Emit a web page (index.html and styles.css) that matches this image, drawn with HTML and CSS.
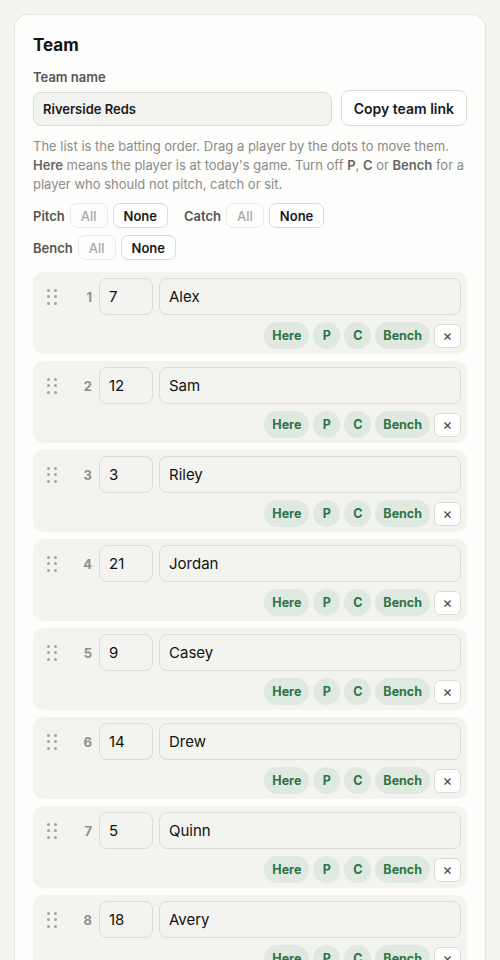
FILE: index.html
```html
<!DOCTYPE html>
<html lang="en">
<head>
<meta charset="utf-8">
<title>Team</title>
<link rel="stylesheet" href="styles.css">
</head>
<body>
<main class="card">
  <h2 class="title">Team</h2>
  <label class="label" for="teamname">Team name</label>
  <div class="name-row">
    <input id="teamname" class="team-input" value="Riverside Reds">
    <button class="copy-btn">Copy team link</button>
  </div>
  <p class="help">The list is the batting order. Drag a player by the dots to move them. <b>Here</b> means the player is at today's game. Turn off <b>P</b>, <b>C</b> or <b>Bench</b> for a player who should not pitch, catch or sit.</p>
  <div class="filters">
    <div class="fgroup"><span class="flabel">Pitch</span><button class="fbtn">All</button><button class="fbtn on">None</button></div>
    <div class="fgroup"><span class="flabel">Catch</span><button class="fbtn">All</button><button class="fbtn on">None</button></div>
    <div class="fgroup"><span class="flabel">Bench</span><button class="fbtn">All</button><button class="fbtn on">None</button></div>
  </div>
  <ol class="players">
    <li class="player"><div class="line"><span class="handle"><i></i><i></i><i></i><i></i><i></i><i></i></span><span class="order">1</span><input class="num" value="7"><input class="pname" value="Alex"></div><div class="tags"><button class="tag">Here</button><button class="tag">P</button><button class="tag">C</button><button class="tag">Bench</button><button class="remove">×</button></div></li>
    <li class="player"><div class="line"><span class="handle"><i></i><i></i><i></i><i></i><i></i><i></i></span><span class="order">2</span><input class="num" value="12"><input class="pname" value="Sam"></div><div class="tags"><button class="tag">Here</button><button class="tag">P</button><button class="tag">C</button><button class="tag">Bench</button><button class="remove">×</button></div></li>
    <li class="player"><div class="line"><span class="handle"><i></i><i></i><i></i><i></i><i></i><i></i></span><span class="order">3</span><input class="num" value="3"><input class="pname" value="Riley"></div><div class="tags"><button class="tag">Here</button><button class="tag">P</button><button class="tag">C</button><button class="tag">Bench</button><button class="remove">×</button></div></li>
    <li class="player"><div class="line"><span class="handle"><i></i><i></i><i></i><i></i><i></i><i></i></span><span class="order">4</span><input class="num" value="21"><input class="pname" value="Jordan"></div><div class="tags"><button class="tag">Here</button><button class="tag">P</button><button class="tag">C</button><button class="tag">Bench</button><button class="remove">×</button></div></li>
    <li class="player"><div class="line"><span class="handle"><i></i><i></i><i></i><i></i><i></i><i></i></span><span class="order">5</span><input class="num" value="9"><input class="pname" value="Casey"></div><div class="tags"><button class="tag">Here</button><button class="tag">P</button><button class="tag">C</button><button class="tag">Bench</button><button class="remove">×</button></div></li>
    <li class="player"><div class="line"><span class="handle"><i></i><i></i><i></i><i></i><i></i><i></i></span><span class="order">6</span><input class="num" value="14"><input class="pname" value="Drew"></div><div class="tags"><button class="tag">Here</button><button class="tag">P</button><button class="tag">C</button><button class="tag">Bench</button><button class="remove">×</button></div></li>
    <li class="player"><div class="line"><span class="handle"><i></i><i></i><i></i><i></i><i></i><i></i></span><span class="order">7</span><input class="num" value="5"><input class="pname" value="Quinn"></div><div class="tags"><button class="tag">Here</button><button class="tag">P</button><button class="tag">C</button><button class="tag">Bench</button><button class="remove">×</button></div></li>
    <li class="player"><div class="line"><span class="handle"><i></i><i></i><i></i><i></i><i></i><i></i></span><span class="order">8</span><input class="num" value="18"><input class="pname" value="Avery"></div><div class="tags"><button class="tag">Here</button><button class="tag">P</button><button class="tag">C</button><button class="tag">Bench</button><button class="remove">×</button></div></li>
    <li class="player"><div class="line"><span class="handle"><i></i><i></i><i></i><i></i><i></i><i></i></span><span class="order">9</span><input class="num" value="11"><input class="pname" value="Morgan"></div><div class="tags"><button class="tag">Here</button><button class="tag">P</button><button class="tag">C</button><button class="tag">Bench</button><button class="remove">×</button></div></li>
  </ol>
</main>
</body>
</html>
```
FILE: styles.css
```css
* { box-sizing: border-box; }
html, body { margin: 0; padding: 0; }
body {
  background: #f3f3ef;
  font-family: Inter, "Noto Sans", "Liberation Sans", sans-serif;
  color: #1a1a1a;
  padding: 14px 14px 0;
}
.card {
  background: #fdfdfb;
  border: 1px solid #e4e4df;
  border-radius: 14px;
  padding: 20px 18px 18px;
}
.title {
  margin: 0;
  font-size: 17px;
  line-height: 21px;
  font-weight: 700;
  color: #111;
}
.label {
  display: block;
  margin-top: 13px;
  font-size: 13px;
  line-height: 16px;
  font-weight: 600;
  color: #555;
}
.name-row {
  display: flex;
  align-items: flex-end;
  gap: 9px;
  margin-top: 5px;
}
.team-input {
  flex: 1;
  min-width: 0;
  height: 34px;
  border: 1px solid #dcdcd6;
  border-radius: 8px;
  background: #f3f3ef;
  padding: 0 9px;
  font: 600 13px Inter, sans-serif;
  color: #1a1a1a;
}
.copy-btn {
  height: 36px;
  padding: 0 12px;
  border: 1px solid #dcdcd6;
  border-radius: 8px;
  background: #fff;
  font: 600 14px Inter, sans-serif;
  color: #1a1a1a;
}
.help {
  margin: 11px 0 0;
  font-size: 13px;
  line-height: 19px;
  color: #8c8c87;
}
.help b { font-weight: 600; color: #666; }
.filters {
  display: flex;
  flex-wrap: wrap;
  column-gap: 16px;
  row-gap: 7px;
  margin-top: 9px;
}
.fgroup {
  display: flex;
  align-items: center;
}
.flabel {
  font-size: 13px;
  font-weight: 600;
  color: #555;
  margin-right: 5px;
}
.fbtn {
  height: 25px;
  padding: 0 10px;
  border: 1px solid #ebebe6;
  border-radius: 7px;
  background: transparent;
  font: 500 13px Inter, sans-serif;
  color: #aaa;
  margin-right: 5px;
}
.fbtn:last-child { margin-right: 0; }
.fbtn.on {
  border-color: #dcdcd6;
  background: #fff;
  color: #1a1a1a;
  font-weight: 600;
}
.players {
  list-style: none;
  margin: 12px 0 0;
  padding: 0;
  display: flex;
  flex-direction: column;
  gap: 7px;
}
.player {
  background: #f3f3ef;
  border-radius: 10px;
  padding: 6px 6px 5px;
}
.line {
  display: flex;
  align-items: center;
}
.handle {
  width: 26px;
  display: grid;
  grid-template-columns: 3px 3px;
  grid-auto-rows: 3px;
  column-gap: 4px;
  row-gap: 3.5px;
  justify-content: center;
  align-content: center;
}
.handle i {
  width: 3px;
  height: 3px;
  border-radius: 50%;
  background: #a3a39e;
}
.order {
  width: 27px;
  text-align: right;
  font-size: 13px;
  font-weight: 700;
  color: #8f8f8a;
  margin-right: 7px;
}
.num, .pname {
  height: 37px;
  border: 1px solid #dcdcd6;
  border-radius: 8px;
  background: #f3f3ef;
  padding: 0 9px;
  font: 400 15px Inter, sans-serif;
  color: #111;
}
.num { width: 54px; }
.pname { flex: 1; min-width: 0; margin-left: 6px; }
.tags {
  display: flex;
  justify-content: flex-end;
  align-items: center;
  gap: 4px;
  margin-top: 7px;
}
.tag {
  height: 27px;
  min-width: 27px;
  padding: 0 8px;
  border: none;
  border-radius: 14px;
  background: #e0e9e0;
  font: 700 12.5px Inter, sans-serif;
  color: #2d7447;
}
.remove {
  width: 27px;
  height: 24px;
  padding: 0;
  border: 1px solid #dcdcd6;
  border-radius: 6px;
  background: #fff;
  font: 400 15px Inter, sans-serif;
  color: #444;
}
```
